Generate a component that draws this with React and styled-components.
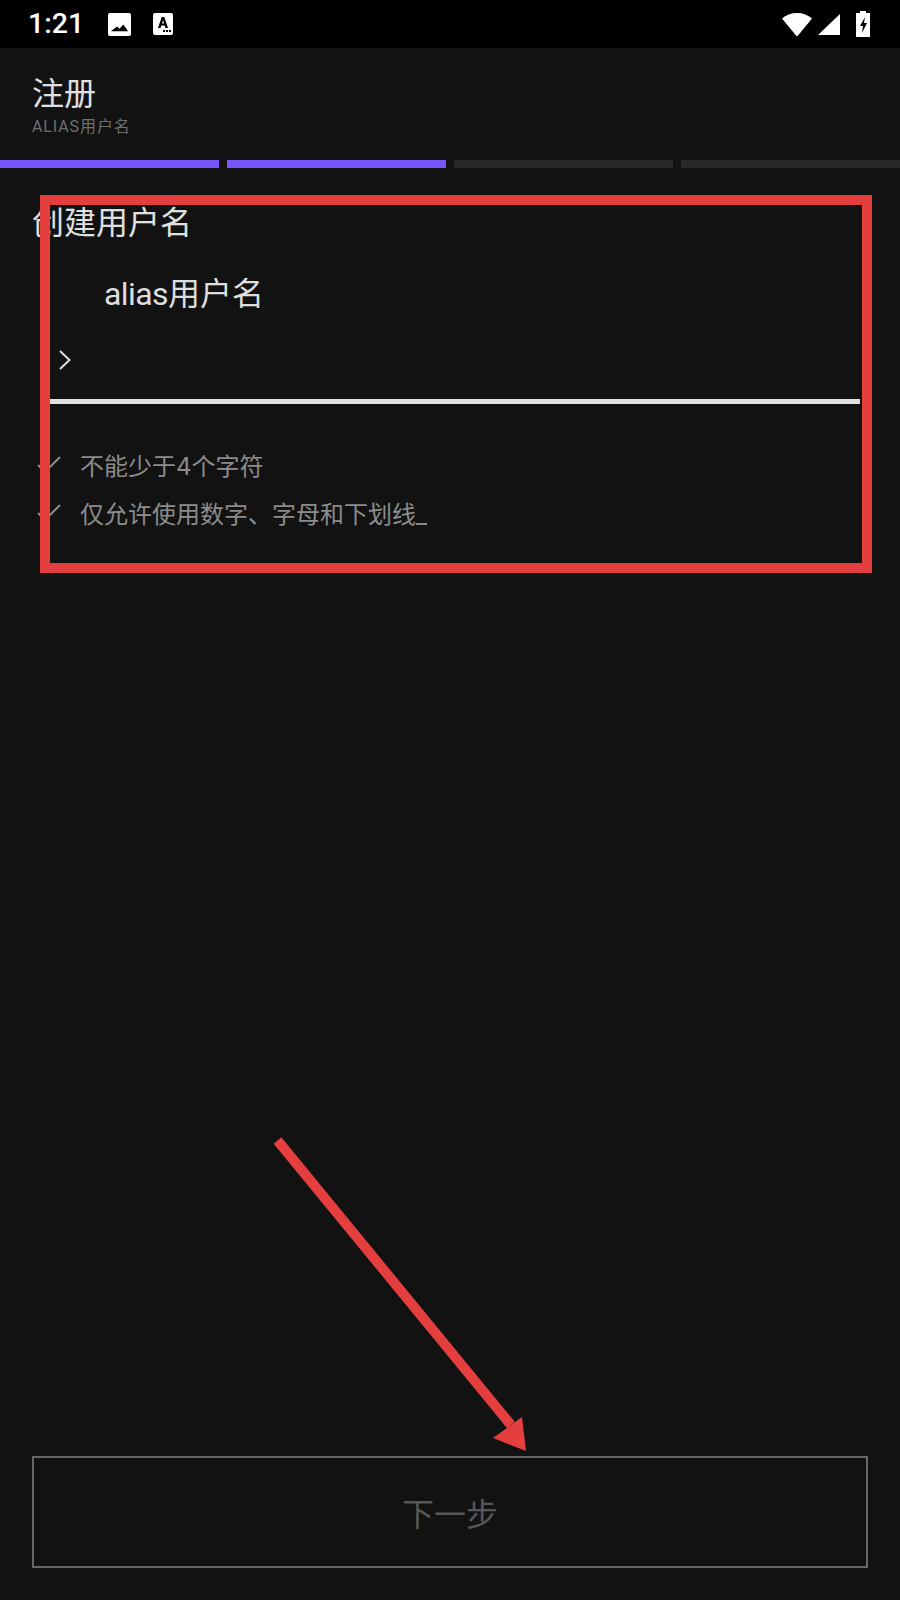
import React from "react";
import styled, { createGlobalStyle } from "styled-components";

const Global = createGlobalStyle`
  html, body { margin: 0; padding: 0; background: #121212; }
  * { box-sizing: border-box; }
`;
const FONT = `Roboto, "Noto Sans CJK SC", sans-serif`;

const Page = styled.div`
  position: relative;
  width: 900px;
  height: 1600px;
  background: #121212;
  display: flex;
  flex-direction: column;
  font-family: ${FONT};
  overflow: hidden;
`;
const StatusBar = styled.div`
  height: 48px;
  background: #000;
  display: flex;
  align-items: center;
  padding: 0 30px 0 28px;
  color: #fff;
`;
const Time = styled.span`
  font: 500 28.500px/1 Roboto, sans-serif;
  width: 80px;
`;
const StatusLeft = styled.div`
  display: flex;
  align-items: center;
  gap: 22px;
`;
const StatusRight = styled.div`
  margin-left: auto;
  display: flex;
  align-items: center;
  gap: 6px;
`;
const Header = styled.header`
  padding: 26px 32px 0;
  height: 112px;
`;
const Title = styled.h1`
  margin: 0;
  font-size: 32px;
  line-height: 40px;
  font-weight: 400;
  color: #e0e0e0;
`;
const Subtitle = styled.div`
  font-size: 16px;
  line-height: 20px;
  letter-spacing: 0.900px;
  color: #6f6f6f;
  margin-top: 3px;
`;
const Progress = styled.div`
  display: grid;
  grid-template-columns: repeat(4, 1fr);
  gap: 8px;
  height: 8px;
`;
const Segment = styled.div`
  background: ${(p) => (p.$on ? "#7856ff" : "#282828")};
`;
const Form = styled.section`
  padding: 31px 40px 0 32px;
  flex: 1;
`;
const Heading = styled.h2`
  margin: 0;
  font-size: 32px;
  line-height: 48px;
  font-weight: 400;
  color: #e0e0e0;
`;
const InputLabel = styled.div`
  margin: 23px 0 0 72px;
  font-size: 32px;
  line-height: 48px;
  color: #dedede;
`;
const LatinPart = styled.span`
  letter-spacing: -0.600px;
`;
const Prompt = styled.div`
  margin: 30px 0 0 27px;
  height: 24px;
  display: flex;
  align-items: center;
`;
const Underline = styled.div`
  height: 5px;
  margin: 27px 0 0 8px;
  background: #e0e0e0;
`;
const Rules = styled.ul`
  list-style: none;
  margin: 42px 0 0;
  padding: 0;
  display: flex;
  flex-direction: column;
  gap: 12px;
`;
const Rule = styled.li`
  display: flex;
  align-items: center;
  height: 36px;
  font-family: Inter, "Noto Sans CJK SC", sans-serif;
  font-size: 24px;
  color: #8c8c8c;
  gap: 17px;
  padding-left: 5px;
`;
const Footer = styled.div`
  padding: 0 32px 32px;
`;
const NextButton = styled.button`
  width: 836px;
  height: 112px;
  display: block;
  background: transparent;
  border: 2px solid #666;
  font-family: ${FONT};
  font-size: 32px;
  color: #575757;
  padding: 0;
`;
const BatteryIcon = styled.svg`
  margin-left: 10px;
`;
const Marks = styled.svg`
  position: absolute;
  inset: 0;
  pointer-events: none;
`;

const Check = () => (
  <svg width="26" height="24" viewBox="0 0 26 24" fill="none" stroke="#8c8c8c" strokeWidth="2">
    <path d="M1 13l7 7L23 5" />
  </svg>
);

export default function App() {
  return (
    <Page>
      <Global />
      <StatusBar>
        <Time>1:21</Time>
        <StatusLeft>
          <svg width="23" height="23" viewBox="0 0 24 24">
            <path fill="#fff" fillRule="evenodd" d="M2 0h20a2 2 0 0 1 2 2v20a2 2 0 0 1-2 2H2a2 2 0 0 1-2-2V2a2 2 0 0 1 2-2zM3 19h18l-5-7-4 4.500-2.500-2.500z" />
          </svg>
          <svg width="20" height="22" viewBox="0 0 20 22">
            <path fill="#fff" fillRule="evenodd" d="M2 0h16a2 2 0 0 1 2 2v18a2 2 0 0 1-2 2H2a2 2 0 0 1-2-2V2a2 2 0 0 1 2-2zM5 15h2.500l.8-2.500h3.400l.8 2.500H15L11.300 4H8.700zM9 10.500l1-3.500 1 3.500zM10 17h2v2h-2zM13 17h2v2h-2zM16 17h2v2h-2z" />
          </svg>
        </StatusLeft>
        <StatusRight>
          <svg width="30" height="24" viewBox="0 0 30 24">
            <path fill="#fff" d="M0 6.500C4 3 9 1 15 1s11 2 15 5.500L16 23.500a1.300 1.300 0 0 1-2 0z" />
          </svg>
          <svg width="22" height="24" viewBox="0 0 22 24">
            <path fill="#fff" d="M22 2v21H0z" />
          </svg>
          <BatteryIcon width="14" height="26" viewBox="0 0 14 26">
            <path fill="#fff" fillRule="evenodd" d="M4 2V0h6v2h4v24H0V2zM9 6L4 15h3l-1 7 5-10H8z" />
          </BatteryIcon>
        </StatusRight>
      </StatusBar>
      <Header>
        <Title>注册</Title>
        <Subtitle>ALIAS用户名</Subtitle>
      </Header>
      <Progress>
        <Segment $on />
        <Segment $on />
        <Segment />
        <Segment />
      </Progress>
      <Form>
        <Heading>创建用户名</Heading>
        <InputLabel><LatinPart>alias</LatinPart>用户名</InputLabel>
        <Prompt>
          <svg width="12" height="20" viewBox="0 0 12 20" fill="none" stroke="#dcdcdc" strokeWidth="2">
            <path d="M1 1l9.500 9L1 19" />
          </svg>
        </Prompt>
        <Underline />
        <Rules>
          <Rule><Check />不能少于4个字符</Rule>
          <Rule><Check />仅允许使用数字、字母和下划线_</Rule>
        </Rules>
      </Form>
      <Footer>
        <NextButton>下一步</NextButton>
      </Footer>
      <Marks width="900" height="1600" viewBox="0 0 900 1600">
        <rect x="45" y="200" width="822" height="368" fill="none" stroke="#e53e3e" strokeWidth="10" />
        <path d="M277.500 1140.500L511 1425" stroke="#e53e3e" strokeWidth="10" fill="none" />
        <path d="M526 1451L493 1438L522 1417z" fill="#e53e3e" />
      </Marks>
    </Page>
  );
}
